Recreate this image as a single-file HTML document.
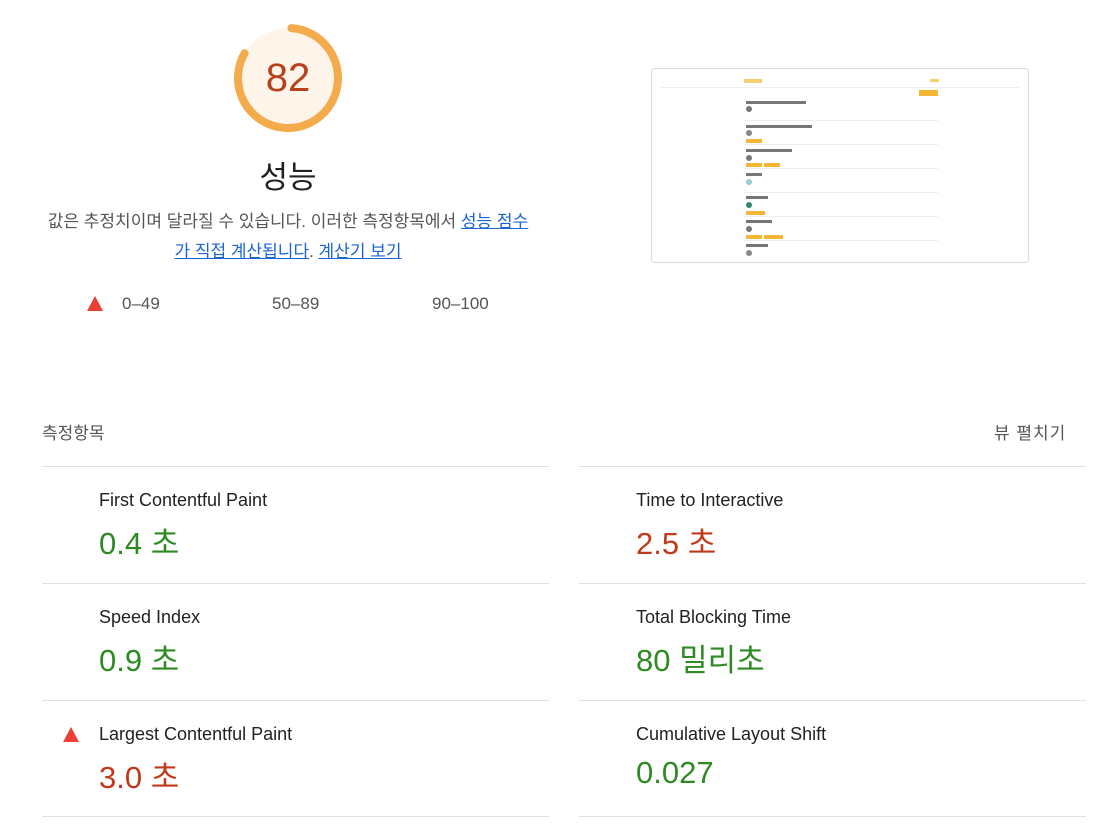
<!DOCTYPE html>
<html><head><meta charset="utf-8"><style>
body{margin:0;width:1116px;height:838px;background:#fff;font-family:"Liberation Sans","Noto Sans CJK KR",sans-serif;position:relative;overflow:hidden;color:#212121}
.a{position:absolute}
a{color:#1a64d6;text-decoration:underline}
.hr{position:absolute;height:1px;background:#e0e0e0}
.t{position:absolute;font-size:18px;color:#212121}
.v{position:absolute;font-size:31px}
.g{color:#2e8a23}.r{color:#c1391b}
.th div{position:absolute}
</style></head><body>
<svg class="a" style="left:228px;top:18px" width="120" height="120" viewBox="0 0 120 120">
<circle cx="60" cy="60" r="50" fill="#fdf4ea"/>
<circle cx="60" cy="60" r="50" fill="none" stroke="#f4ab4c" stroke-width="8" stroke-linecap="round" stroke-dasharray="257.6 400" transform="rotate(-86 60 60)"/>
</svg>
<div class="a" style="left:228px;top:56px;width:120px;text-align:center;font-size:40px;color:#b8401a">82</div>
<div class="a" style="left:188px;top:152px;width:200px;text-align:center;font-size:31px;color:#212121">성능</div>
<div class="a" style="left:40px;top:207px;width:496px;text-align:center;font-size:17px;line-height:30px;color:#555">값은 추정치이며 달라질 수 있습니다. 이러한 측정항목에서 <a>성능 점수<br>가 직접 계산됩니다</a>. <a>계산기 보기</a></div>
<div class="a" style="left:87px;top:296px;width:0;height:0;border-left:8px solid transparent;border-right:8px solid transparent;border-bottom:15px solid #eb4034"></div>
<div class="a" style="left:122px;top:294px;font-size:17px;color:#555">0–49</div>
<div class="a" style="left:272px;top:294px;font-size:17px;color:#555">50–89</div>
<div class="a" style="left:432px;top:294px;font-size:17px;color:#555">90–100</div>

<div class="a th" style="left:651px;top:68px;width:376px;height:193px;border:1px solid #d8d8d8;border-radius:4px;overflow:hidden">
<div style="left:92px;top:10px;width:18px;height:4px;background:#f5d070"></div>
<div style="left:278px;top:10px;width:9px;height:3px;background:#f5d070"></div>
<div style="left:8px;top:18px;width:360px;height:1px;background:#f0f0f0"></div>
<div style="left:267px;top:21px;width:19px;height:6px;background:#f5b733"></div>
<div style="left:94px;top:32px;width:60px;height:3px;background:#777"></div>
<div style="left:94px;top:37px;width:6px;height:6px;border-radius:50%;background:#777"></div>
<div style="left:94px;top:56px;width:66px;height:3px;background:#777"></div>
<div style="left:94px;top:61px;width:6px;height:6px;border-radius:50%;background:#888"></div>
<div style="left:94px;top:70px;width:16px;height:4px;background:#f5b733"></div>
<div style="left:94px;top:80px;width:46px;height:3px;background:#777"></div>
<div style="left:94px;top:86px;width:6px;height:6px;border-radius:50%;background:#777"></div>
<div style="left:94px;top:94px;width:16px;height:4px;background:#f5b733"></div>
<div style="left:112px;top:94px;width:16px;height:4px;background:#f5b733"></div>
<div style="left:94px;top:104px;width:16px;height:3px;background:#777"></div>
<div style="left:94px;top:110px;width:6px;height:6px;border-radius:50%;background:#9cc"></div>
<div style="left:94px;top:127px;width:22px;height:3px;background:#777"></div>
<div style="left:94px;top:133px;width:6px;height:6px;border-radius:50%;background:#386"></div>
<div style="left:94px;top:142px;width:19px;height:4px;background:#f5b733"></div>
<div style="left:94px;top:151px;width:26px;height:3px;background:#777"></div>
<div style="left:94px;top:157px;width:6px;height:6px;border-radius:50%;background:#777"></div>
<div style="left:94px;top:166px;width:16px;height:4px;background:#f5b733"></div>
<div style="left:112px;top:166px;width:19px;height:4px;background:#f5b733"></div>
<div style="left:94px;top:175px;width:22px;height:3px;background:#777"></div>
<div style="left:94px;top:181px;width:6px;height:6px;border-radius:50%;background:#888"></div>
<div style="left:92px;top:51px;width:194px;height:1px;background:#eee"></div>
<div style="left:92px;top:75px;width:194px;height:1px;background:#eee"></div>
<div style="left:92px;top:99px;width:194px;height:1px;background:#eee"></div>
<div style="left:92px;top:123px;width:194px;height:1px;background:#eee"></div>
<div style="left:92px;top:147px;width:194px;height:1px;background:#eee"></div>
<div style="left:92px;top:171px;width:194px;height:1px;background:#eee"></div>
</div>

<div class="a" style="left:42px;top:419px;font-size:17px;color:#555">측정항목</div>
<div class="a" style="left:994px;top:419px;font-size:17px;color:#555;letter-spacing:1px">뷰 펼치기</div>
<div class="hr" style="left:42px;top:466px;width:507px"></div>
<div class="hr" style="left:579px;top:466px;width:507px"></div>
<div class="hr" style="left:42px;top:583px;width:507px"></div>
<div class="hr" style="left:579px;top:583px;width:507px"></div>
<div class="hr" style="left:42px;top:700px;width:507px"></div>
<div class="hr" style="left:579px;top:700px;width:507px"></div>
<div class="hr" style="left:42px;top:816px;width:507px"></div>
<div class="hr" style="left:579px;top:816px;width:507px"></div>

<div class="t" style="left:99px;top:490px">First Contentful Paint</div>
<div class="v g" style="left:99px;top:518px">0.4 초</div>
<div class="t" style="left:636px;top:490px">Time to Interactive</div>
<div class="v r" style="left:636px;top:518px">2.5 초</div>
<div class="t" style="left:99px;top:607px">Speed Index</div>
<div class="v g" style="left:99px;top:635px">0.9 초</div>
<div class="t" style="left:636px;top:607px">Total Blocking Time</div>
<div class="v g" style="left:636px;top:635px">80 밀리초</div>
<div class="a" style="left:63px;top:727px;width:0;height:0;border-left:8px solid transparent;border-right:8px solid transparent;border-bottom:15px solid #eb4034"></div>
<div class="t" style="left:99px;top:724px">Largest Contentful Paint</div>
<div class="v r" style="left:99px;top:752px">3.0 초</div>
<div class="t" style="left:636px;top:724px">Cumulative Layout Shift</div>
<div class="v g" style="left:636px;top:755px">0.027</div>
</body></html>
